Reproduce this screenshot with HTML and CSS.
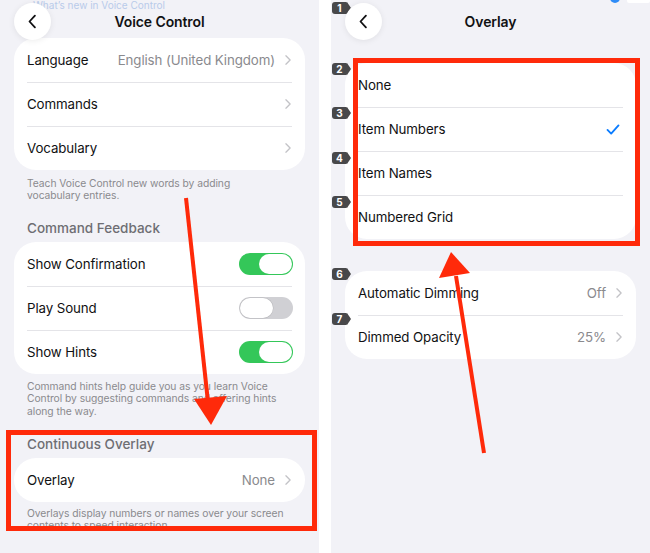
FILE: index.html
```html
<!DOCTYPE html>
<html lang="en">
<head>
<meta charset="utf-8">
<title>Voice Control – Overlay</title>
<link rel="stylesheet" href="styles.css">
</head>
<body>
<main class="screen">
  <section class="panel">
    <span class="peek">What’s new in Voice Control</span>
    <header class="nav">
      <button class="back" aria-label="Back"><svg viewBox="0 0 12 18" width="10" height="15"><path d="M9.5 2 L3 9 L9.5 16"/></svg></button>
      <h1 class="title">Voice Control</h1>
    </header>

    <div class="group first">
      <div class="row"><span class="label">Language</span><span class="value">English (United Kingdom)</span><svg class="chev" viewBox="0 0 7 12" width="6" height="10"><path d="M1 1 L6 6 L1 11"/></svg></div>
      <div class="row"><span class="label">Commands</span><svg class="chev" viewBox="0 0 7 12" width="6" height="10"><path d="M1 1 L6 6 L1 11"/></svg></div>
      <div class="row"><span class="label">Vocabulary</span><svg class="chev" viewBox="0 0 7 12" width="6" height="10"><path d="M1 1 L6 6 L1 11"/></svg></div>
    </div>
    <p class="foot">Teach Voice Control new words by adding vocabulary entries.</p>

    <h2 class="sect">Command Feedback</h2>
    <div class="group">
      <div class="row"><span class="label">Show Confirmation</span><span class="toggle on"></span></div>
      <div class="row"><span class="label">Play Sound</span><span class="toggle"></span></div>
      <div class="row"><span class="label">Show Hints</span><span class="toggle on"></span></div>
    </div>
    <p class="foot foot-3">Command hints help guide you as you learn Voice Control by suggesting commands and offering hints along the way.</p>

    <h2 class="sect">Continuous Overlay</h2>
    <div class="group">
      <div class="row"><span class="label">Overlay</span><span class="value">None</span><svg class="chev" viewBox="0 0 7 12" width="6" height="10"><path d="M1 1 L6 6 L1 11"/></svg></div>
    </div>
    <p class="foot foot-last">Overlays display numbers or names over your screen contents to speed interaction.</p>

    <div class="mark mark-left"></div>
  </section>

  <section class="panel">
    <span class="status-dot"></span><span class="status-bar"></span>
    <header class="nav">
      <button class="back" aria-label="Back"><svg viewBox="0 0 12 18" width="10" height="15"><path d="M9.5 2 L3 9 L9.5 16"/></svg></button>
      <h1 class="title">Overlay</h1>
    </header>

    <div class="group options">
      <div class="row"><span class="label">None</span></div>
      <div class="row"><span class="label">Item Numbers</span><svg class="check" viewBox="0 0 15 12" width="14" height="11"><path d="M1.5 6.5 L5.5 10.5 L13.5 1.5"/></svg></div>
      <div class="row"><span class="label">Item Names</span></div>
      <div class="row"><span class="label">Numbered Grid</span></div>
    </div>

    <div class="group dimming">
      <div class="row"><span class="label">Automatic Dimming</span><span class="value">Off</span><svg class="chev" viewBox="0 0 7 12" width="6" height="10"><path d="M1 1 L6 6 L1 11"/></svg></div>
      <div class="row"><span class="label">Dimmed Opacity</span><span class="value">25%</span><svg class="chev" viewBox="0 0 7 12" width="6" height="10"><path d="M1 1 L6 6 L1 11"/></svg></div>
    </div>

    <span class="badge b1">1</span>
    <span class="badge b2">2</span>
    <span class="badge b3">3</span>
    <span class="badge b4">4</span>
    <span class="badge b5">5</span>
    <span class="badge b6">6</span>
    <span class="badge b7">7</span>

    <div class="mark mark-right"></div>
  </section>

  <svg class="arrows" viewBox="0 0 650 553" width="650" height="553">
    <line x1="186" y1="198" x2="208" y2="402"/>
    <polygon points="194,399 227,396 211,425"/>
    <line x1="456" y1="276" x2="484" y2="453"/>
    <polygon points="439,278 470,273 451,252"/>
  </svg>
</main>
</body>
</html>
```

FILE: styles.css
```css
* { box-sizing: border-box; }

body {
  margin: 0;
  background: #ffffff;
  font-family: Inter, "Noto Sans", "Liberation Sans", sans-serif;
  color: #111113;
}

.screen {
  position: relative;
  display: flex;
  gap: 12px;
  width: 650px;
  height: 553px;
  overflow: hidden;
  background: #ffffff;
}

.panel {
  position: relative;
  flex: none;
  width: 319px;
  height: 553px;
  background: #f2f2f7;
  overflow: hidden;
}

.peek {
  position: absolute;
  top: 0;
  left: 33px;
  font-size: 10px;
  line-height: 11px;
  color: #b9cbea;
}

.status-dot {
  position: absolute;
  top: -7px;
  left: 279px;
  width: 10px;
  height: 10px;
  border-radius: 50%;
  background: #2f8cf7;
}
.status-bar {
  position: absolute;
  top: -2px;
  left: 296px;
  width: 23px;
  height: 5px;
  border-radius: 2px;
  background: #ffffff;
}

.nav {
  position: relative;
  z-index: 2;
  display: grid;
  grid-template-columns: 37px 1fr 37px;
  align-items: start;
  height: 38px;
  padding: 0 14px;
}

.back {
  width: 37px;
  height: 37px;
  margin-top: 3px;
  padding: 0;
  border: none;
  border-radius: 50%;
  background: #ffffff;
  box-shadow: 0 1px 6px rgba(0, 0, 0, 0.08);
  display: flex;
  align-items: center;
  justify-content: center;
}
.back svg {
  margin-left: -1px;
  fill: none;
  stroke: #111113;
  stroke-width: 2.2;
  stroke-linecap: round;
  stroke-linejoin: round;
}

.title {
  margin: 12px 0 0;
  font-size: 14px;
  line-height: 20px;
  font-weight: 600;
  text-align: center;
  letter-spacing: -0.1px;
}

.group {
  margin: 0 14px;
  background: #ffffff;
  border-radius: 22px;
}

.row {
  position: relative;
  display: flex;
  align-items: center;
  height: 44px;
  padding: 0 14px 0 13px;
  font-size: 13.3px;
}
.row + .row::before {
  content: "";
  position: absolute;
  top: 0;
  left: 13px;
  right: 13px;
  height: 1px;
  background: #e4e4e8;
}

.label {
  flex: 1;
  letter-spacing: -0.1px;
}

.value {
  color: #8a8a8e;
  margin-right: 10px;
  letter-spacing: -0.1px;
}

.chev {
  fill: none;
  stroke: #c3c3c7;
  stroke-width: 1.6;
  stroke-linecap: round;
  stroke-linejoin: round;
}

.check {
  margin-right: 2px;
  fill: none;
  stroke: #0a7cff;
  stroke-width: 2;
  stroke-linecap: round;
  stroke-linejoin: round;
}

.toggle {
  position: relative;
  width: 54px;
  height: 22px;
  margin-right: -2px;
  border-radius: 11px;
  background: #d0d0d4;
}
.toggle::after {
  content: "";
  position: absolute;
  top: 1px;
  left: 1px;
  width: 33px;
  height: 20px;
  border-radius: 10px;
  background: #ffffff;
  box-shadow: 0 0 0 0.5px rgba(0, 0, 0, 0.12);
}
.toggle.on {
  background: #34c759;
}
.toggle.on::after {
  left: auto;
  right: 1px;
  box-shadow: none;
}

.foot {
  margin: 7px 0 0;
  padding: 0 34px 0 27px;
  font-size: 10.3px;
  line-height: 12px;
  letter-spacing: -0.05px;
  color: #8a8a8e;
}
.foot-3 {
  margin-top: 6px;
  line-height: 12.3px;
}
.foot-last {
  margin-top: 5px;
}

.sect {
  margin: 18px 0 5px;
  padding: 0 27px;
  font-size: 13.5px;
  line-height: 18px;
  font-weight: 500;
  color: #6e6e73;
}

.options {
  margin-top: 25px;
}
.dimming {
  margin-top: 32px;
}

.mark {
  position: absolute;
  border: 5px solid #ff2a0a;
  pointer-events: none;
}
.mark-left {
  left: 6px;
  top: 430px;
  width: 311px;
  height: 101px;
}
.mark-right {
  left: 22px;
  top: 58px;
  width: 287px;
  height: 188px;
}

.badge {
  position: absolute;
  left: 1px;
  width: 15px;
  height: 12px;
  border-radius: 3px 1px 1px 3px;
  background: #48484a;
  color: #ffffff;
  font-size: 10px;
  font-weight: 700;
  line-height: 12px;
  text-align: center;
}
.badge::after {
  content: "";
  position: absolute;
  top: 0;
  right: -4px;
  border-top: 6px solid transparent;
  border-bottom: 6px solid transparent;
  border-left: 4px solid #48484a;
}
.b1 { top: 2px; }
.b2 { top: 63px; }
.b3 { top: 107px; }
.b4 { top: 152px; }
.b5 { top: 196px; }
.b6 { top: 268px; }
.b7 { top: 313px; }

.arrows {
  position: absolute;
  top: 0;
  left: 0;
  pointer-events: none;
}
.arrows line {
  stroke: #ff2a0a;
  stroke-width: 4;
}
.arrows polygon {
  fill: #ff2a0a;
}
```
